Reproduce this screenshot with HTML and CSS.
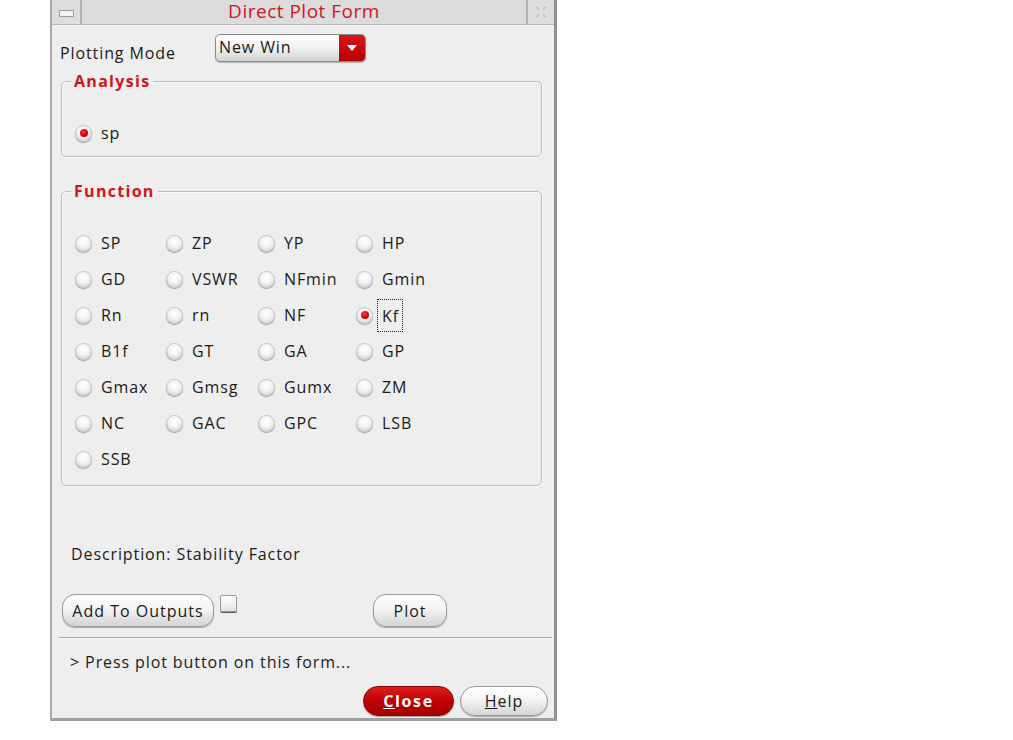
FILE: index.html
```html
<!DOCTYPE html>
<html>
<head>
<meta charset="utf-8">
<link rel="stylesheet" href="styles.css">
</head>
<body>
<div class="window">
  <div class="titlebar">
    <div class="tb-btn tb-min"><span class="min-glyph"></span></div>
    <div class="tb-title">Direct Plot Form</div>
    <div class="tb-btn tb-close">
      <svg width="16" height="16" viewBox="0 0 16 16"><path d="M3 3l3 3M13 3l-3 3M3 13l3-3M13 13l-3-3M4 4h2M12 4h-2M4 12h2M12 12h-2" stroke="#bdbdbd" stroke-width="1.5" fill="none" stroke-dasharray="1.5 1"/></svg>
    </div>
  </div>
  <div class="content">
    <div class="mode-row">
      <span class="mode-label">Plotting Mode</span>
      <div class="combo">
        <span class="combo-text">New Win</span>
        <span class="combo-arrow"><svg width="10" height="6" viewBox="0 0 10 6"><path d="M0 0h10L5 6z" fill="#fff"/></svg></span>
      </div>
    </div>

    <div class="group analysis">
      <div class="legend">Analysis</div>
      <label class="opt single"><span class="radio on"></span><span>sp</span></label>
    </div>

    <div class="group function">
      <div class="legend">Function</div>
      <div class="grid">
        <label class="opt"><span class="radio"></span><span>SP</span></label>
        <label class="opt"><span class="radio"></span><span>ZP</span></label>
        <label class="opt"><span class="radio"></span><span>YP</span></label>
        <label class="opt"><span class="radio"></span><span>HP</span></label>

        <label class="opt"><span class="radio"></span><span>GD</span></label>
        <label class="opt"><span class="radio"></span><span>VSWR</span></label>
        <label class="opt"><span class="radio"></span><span>NFmin</span></label>
        <label class="opt"><span class="radio"></span><span>Gmin</span></label>

        <label class="opt"><span class="radio"></span><span>Rn</span></label>
        <label class="opt"><span class="radio"></span><span>rn</span></label>
        <label class="opt"><span class="radio"></span><span>NF</span></label>
        <label class="opt"><span class="radio on"></span><span class="focus">Kf</span></label>

        <label class="opt"><span class="radio"></span><span>B1f</span></label>
        <label class="opt"><span class="radio"></span><span>GT</span></label>
        <label class="opt"><span class="radio"></span><span>GA</span></label>
        <label class="opt"><span class="radio"></span><span>GP</span></label>

        <label class="opt"><span class="radio"></span><span>Gmax</span></label>
        <label class="opt"><span class="radio"></span><span>Gmsg</span></label>
        <label class="opt"><span class="radio"></span><span>Gumx</span></label>
        <label class="opt"><span class="radio"></span><span>ZM</span></label>

        <label class="opt"><span class="radio"></span><span>NC</span></label>
        <label class="opt"><span class="radio"></span><span>GAC</span></label>
        <label class="opt"><span class="radio"></span><span>GPC</span></label>
        <label class="opt"><span class="radio"></span><span>LSB</span></label>

        <label class="opt"><span class="radio"></span><span>SSB</span></label>
      </div>
    </div>

    <div class="desc">Description: Stability Factor</div>

    <div class="btn-row">
      <button class="btn add">Add To Outputs</button>
      <span class="check"></span>
      <button class="btn plot">Plot</button>
    </div>
  </div>
  <div class="separator"></div>
  <div class="status">&gt; Press plot button on this form...</div>
  <div class="bottom-row">
    <button class="btn red"><u>C</u>lose</button>
    <button class="btn help"><u>H</u>elp</button>
  </div>
</div>
</body>
</html>
```

FILE: styles.css
```css
html, body {
  margin: 0;
  padding: 0;
  background: #fdfdfd;
}
body {
  font-family: "Open Sans", "DejaVu Sans", sans-serif;
  font-size: 16px;
  letter-spacing: 0.9px;
  color: #1a1a1a;
}
.window {
  margin-left: 50px;
  width: 502px;
  height: 718px;
  background: #eeeeee;
  border-left: 2px solid #a9a9a9;
  border-right: 3px solid #8f8f8f;
  border-bottom: 3px solid #a0a0a0;
  display: flex;
  flex-direction: column;
}
.titlebar {
  display: flex;
  height: 25px;
  background: #dcdcdc;
  border-bottom: 1px solid #b8b8b8;
  box-sizing: border-box;
}
.tb-btn {
  width: 28px;
  display: flex;
  align-items: center;
  justify-content: center;
  background: #dedede;
}
.tb-min {
  border-right: 2px solid #b0b0b0;
}
.min-glyph {
  width: 13px;
  height: 5px;
  border: 1px solid #9a9a9a;
  background: #f3f3f3;
  margin-top: 2px;
}
.tb-close {
  border-left: 2px solid #b0b0b0;
  width: 26px;
}
.tb-title {
  flex: 1;
  text-align: center;
  color: #d1151c;
  font-size: 19px;
  letter-spacing: 0.5px;
  line-height: 22px;
}
.content {
  padding: 9px 0 0 9px;
}
.mode-row {
  display: flex;
  align-items: center;
  height: 28px;
}
.mode-label {
  width: 155px;
  margin-left: -1px;
  padding-top: 10px;
}
.combo {
  width: 149px;
  height: 26px;
  border: 1px solid #8a8a8a;
  border-radius: 5px;
  background: linear-gradient(#ffffff, #f1f1f1 50%, #d2d2d2);
  display: flex;
  overflow: hidden;
  box-shadow: 0 1px 1px rgba(0,0,0,0.25);
}
.combo-text {
  flex: 1;
  padding-left: 3px;
  line-height: 24px;
}
.combo-arrow {
  width: 26px;
  background: linear-gradient(#d8141b, #b80000);
  display: flex;
  align-items: center;
  justify-content: center;
}
.group {
  width: 479px;
  border: 1px solid #bcbcbc;
  border-radius: 5px;
  box-shadow: inset 1px 1px 0 #fafafa, 1px 1px 0 #fafafa;
}
.analysis {
  margin-top: 19px;
  padding-bottom: 5px;
}
.function {
  margin-top: 34px;
  padding-bottom: 8px;
}
.legend {
  width: fit-content;
  margin: -11px 0 0 9px;
  padding: 0 3px;
  background: #eeeeee;
  color: #d1151c;
  font-weight: bold;
  font-size: 16px;
  line-height: 20px;
  letter-spacing: 1.3px;
}
.opt {
  display: flex;
  align-items: center;
  gap: 9px;
  height: 36px;
}
.single {
  margin: 24px 0 0 13px;
}
.grid {
  display: grid;
  grid-template-columns: 91px 92px 98px 120px;
  margin: 24px 0 0 13px;
}
.radio {
  width: 17px;
  height: 17px;
  border-radius: 50%;
  box-sizing: border-box;
  border: 1px solid #c4c4c4;
  background: radial-gradient(circle at 50% 35%, #ffffff 0%, #f4f4f4 45%, #c9c9c9 100%);
  box-shadow: 0 1px 1px rgba(0,0,0,0.35);
  display: flex;
  align-items: center;
  justify-content: center;
  flex: none;
}
.radio.on::after {
  content: "";
  width: 8px;
  height: 8px;
  border-radius: 50%;
  background: radial-gradient(circle at 40% 35%, #ff3a3a, #d00000 60%, #a00000);
}
.focus {
  outline: 1px dotted #222;
  outline-offset: 0;
  padding: 5px 3px 4px 4px;
  margin-left: -4px;
}
.desc {
  margin: 57px 0 0 10px;
}
.btn-row {
  display: flex;
  align-items: flex-start;
  margin-top: 29px;
}
.btn {
  font-family: inherit;
  font-size: 16px;
  letter-spacing: 1px;
  color: #1a1a1a;
  height: 33px;
  border: 1px solid #9a9a9a;
  border-radius: 13px;
  background: linear-gradient(#ffffff, #f4f4f4 45%, #d4d4d4);
  box-shadow: 0 1px 1px rgba(0,0,0,0.3);
  padding: 0;
  margin: 0;
}
.add {
  width: 152px;
  margin-left: 1px;
}
.check {
  width: 15px;
  height: 15px;
  border: 1px solid #9a9a9a;
  border-radius: 2px;
  background: linear-gradient(#ffffff, #e2e2e2);
  margin: 1px 0 0 6px;
  box-shadow: 0 1px 0 #555;
}
.plot {
  width: 74px;
  margin-left: 136px;
}
.separator {
  margin: 10px 0 0 7px;
  height: 1px;
  width: 493px;
  background: #a4a4a4;
  border-bottom: 1px solid #fafafa;
}
.status {
  margin: 12px 0 0 18px;
  line-height: 22px;
}
.bottom-row {
  display: flex;
  justify-content: flex-end;
  gap: 6px;
  margin: 13px 6px 0 0;
}
.bottom-row .btn {
  height: 30px;
  border-radius: 15px;
}
.red {
  width: 91px;
  color: #ffffff;
  font-weight: bold;
  letter-spacing: 1.6px;
  border-color: #8a0000;
  background: linear-gradient(#e01e1e, #c00000 50%, #a80000);
}
.help {
  width: 88px;
}
```
